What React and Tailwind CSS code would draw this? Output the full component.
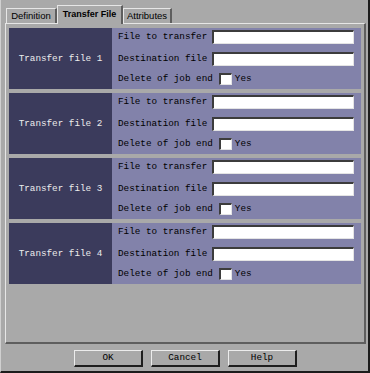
import React from 'react'

const MONO = { fontFamily: '"Liberation Mono", "DejaVu Sans Mono", monospace' }
const SANS = { fontFamily: '"Liberation Sans", Arial, sans-serif' }

const FILES = [1, 2, 3, 4]

function Field() {
  return (
    <div className="w-[142px] h-[14px] bg-white border-t-2 border-l-2 border-t-[#3c3c3c] border-l-[#3c3c3c] border-b border-r border-b-[#e4e4e4] border-r-[#e4e4e4]" />
  )
}

function TransferBlock({ n }) {
  return (
    <div className="flex h-[61px]">
      <div className="w-[103px] bg-[#3b3b5c] flex items-center justify-center text-[#ececec] text-[9.3px]" style={MONO}>
        Transfer file {n}
      </div>
      <div className="flex-1 bg-[#8282aa] pl-[6px] pt-[2px] text-black text-[9.3px]" style={MONO}>
        <div className="flex items-center h-[14px]">
          <span className="w-[94px]">File to transfer</span>
          <Field />
        </div>
        <div className="flex items-center h-[14px] mt-[8px]">
          <span className="w-[94px]">Destination file</span>
          <Field />
        </div>
        <div className="flex items-center h-[12px] mt-[7px]">
          <span>Delete of job end</span>
          <div className="ml-[6px] w-[13px] h-[12px] bg-white border-t-2 border-l-2 border-t-[#3c3c3c] border-l-[#3c3c3c] border-b border-r border-b-[#e4e4e4] border-r-[#e4e4e4]" />
          <span className="ml-[3px]">Yes</span>
        </div>
      </div>
    </div>
  )
}

function Tab({ label, active, width }) {
  if (active) {
    return (
      <div
        className={`${width} h-[19px] -mb-px relative z-10 bg-[#a9a9a9] border-t border-l border-t-[#e6e6e6] border-l-[#e6e6e6] border-r-2 border-r-[#5e5e5e] flex items-center justify-center font-bold text-[9px] text-black`}
        style={SANS}
      >
        {label}
      </div>
    )
  }
  return (
    <div
      className={`${width} h-[15px] bg-[#a9a9a9] border-t border-l border-t-[#e6e6e6] border-l-[#e6e6e6] border-r-2 border-r-[#5e5e5e] flex items-center justify-center text-[9.5px] text-black`}
      style={SANS}
    >
      {label}
    </div>
  )
}

function Button({ label }) {
  return (
    <div
      className="w-[69px] h-[17px] bg-[#a9a9a9] border-t border-l border-t-[#ececec] border-l-[#ececec] border-b-2 border-r-2 border-b-[#1e1e1e] border-r-[#1e1e1e] flex items-center justify-center text-[9.3px] text-black"
      style={MONO}
    >
      {label}
    </div>
  )
}

export default function App() {
  return (
    <div className="w-[370px] h-[373px] bg-[#a9a9a9] border-l border-l-[#d0d0d0] border-r-2 border-b-2 border-r-[#1c1c1c] border-b-[#1c1c1c] flex flex-col overflow-hidden">
      {/* tabs */}
      <div className="flex items-end h-[23px] pl-[5px]">
        <Tab label="Definition" width="w-[51px]" />
        <Tab label="Transfer File" active width="w-[66px]" />
        <Tab label="Attributes" width="w-[49px]" />
      </div>

      {/* panel */}
      <div className="ml-[4px] mr-[2px] h-[321px] border-t border-l border-t-[#e6e6e6] border-l-[#e6e6e6] border-r-2 border-b-2 border-r-[#5e5e5e] border-b-[#5e5e5e] pt-[4px] pl-[3px] pr-[3px] flex flex-col gap-[4px]">
        {FILES.map(n => (
          <TransferBlock key={n} n={n} />
        ))}
      </div>

      {/* buttons */}
      <div className="flex justify-center gap-[8px] pt-[6px] pl-[2px]">
        <Button label="OK" />
        <Button label="Cancel" />
        <Button label="Help" />
      </div>
    </div>
  )
}
